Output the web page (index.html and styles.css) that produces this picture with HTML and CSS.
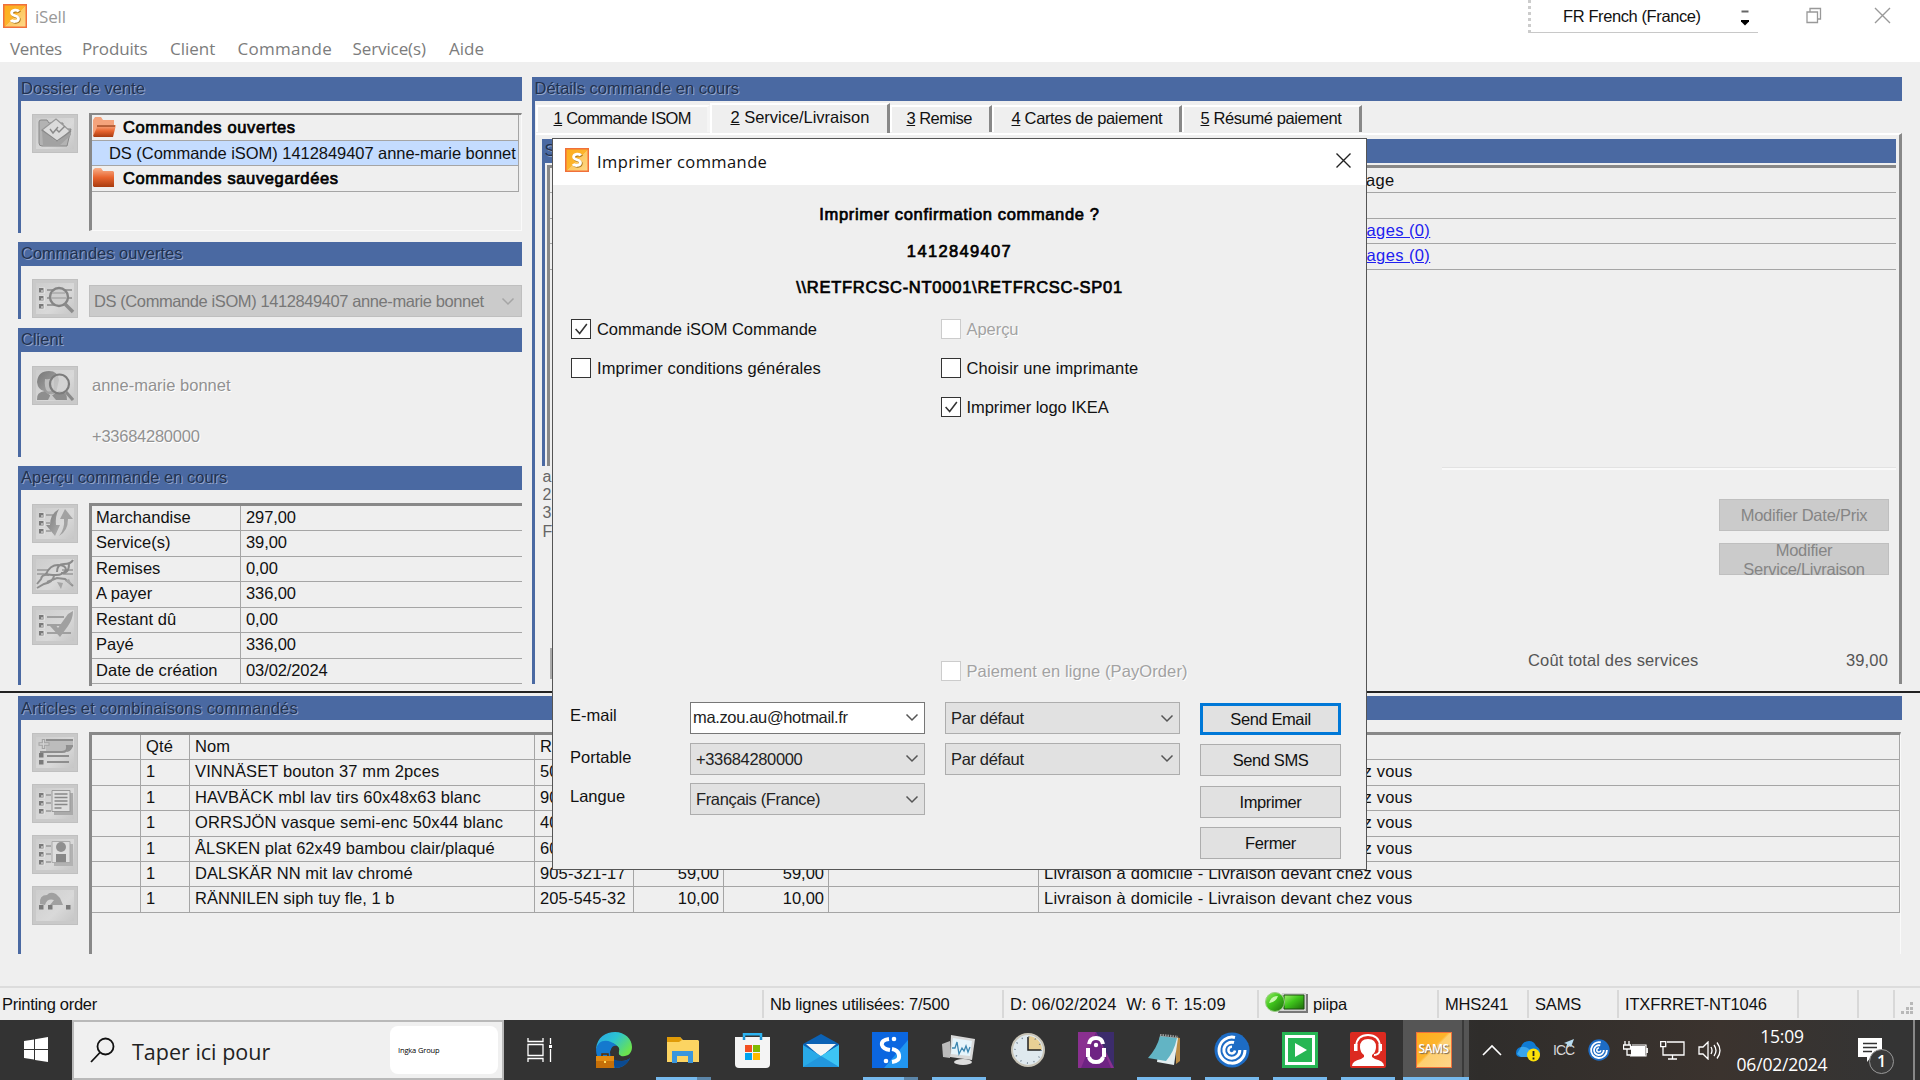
FILE: index.html
```html
<!DOCTYPE html>
<html lang="fr">
<head>
<meta charset="utf-8">
<title>iSell</title>
<link rel="stylesheet" href="styles.css">
</head>
<body>
<svg class="defs" width="0" height="0">
  <defs>
    <linearGradient id="gOrange" x1="0" y1="0" x2="1" y2="1"><stop offset="0" stop-color="#fdae1c"/><stop offset=".5" stop-color="#fdb42c"/><stop offset=".5" stop-color="#fdc860"/><stop offset="1" stop-color="#fed98a"/></linearGradient>
    <linearGradient id="gFolder" x1="0" y1="0" x2="0" y2="1"><stop offset="0" stop-color="#f9b08a"/><stop offset=".5" stop-color="#e8642e"/><stop offset="1" stop-color="#a83c10"/></linearGradient>
    <linearGradient id="gGrey" x1="0" y1="0" x2="1" y2="1"><stop offset="0" stop-color="#777"/><stop offset="1" stop-color="#b0b0b0"/></linearGradient>
    <linearGradient id="gGreen" x1="0" y1="0" x2="1" y2="1"><stop offset="0" stop-color="#9cf06a"/><stop offset=".45" stop-color="#3fc51c"/><stop offset="1" stop-color="#1e6a0c"/></linearGradient>
    <linearGradient id="gEdge" x1="0" y1="0" x2="1" y2=".6"><stop offset="0" stop-color="#2aa5e6"/><stop offset=".5" stop-color="#2bc3d2"/><stop offset="1" stop-color="#6be34f"/></linearGradient>
    <symbol id="app-s" viewBox="0 0 24 24"><rect x=".75" y=".75" width="22.5" height="22.5" fill="url(#gOrange)" stroke="#f0703a" stroke-width="1.5"/><path d="M16 7.5C15 5.8 8.800 5.300 8.600 8.900C8.500 12.400 15.800 11.200 15.500 14.800C15.200 18.300 9.200 18 8 16" fill="none" stroke="#a87820" stroke-width="2.800" transform="translate(.8 .8)"/><path d="M15.800 7.500C14.800 5.600 8.800 5.300 8.600 8.900C8.500 12.400 15.800 11.200 15.500 14.800C15.200 18.300 9.200 18 8 16" fill="none" stroke="#fff" stroke-width="2.800"/></symbol>
    <symbol id="bullets" viewBox="0 0 46 39"><path d="M7 8.500h6v6H7zM7 16.500h6v6H7zM7 24.500h6v6H7z" fill="#e2e2e2"/><path d="M7 9h4.500v4.500H7zM7 17h4.500v4.500H7zM7 25h4.500v4.500H7z" fill="#7a7a7a"/><path d="M9 11h2v2H9zM9 19h2v2H9zM9 27h2v2H9z" fill="#b4b4b4"/></symbol>
    <symbol id="citrix" viewBox="0 0 36 36"><circle cx="18" cy="18" r="17.500" fill="#1d6cc5"/><path d="M21 5.500A13 13 0 1 0 31 18M20 10.500A8 8 0 1 0 25.800 18" fill="none" stroke="#fff" stroke-width="3"/><path d="M18 14.800A3.300 3.300 0 1 0 21 18.500" fill="none" stroke="#fff" stroke-width="2.500"/></symbol>
    <symbol id="chev" viewBox="0 0 14 9"><path d="M1.500 1.500L7 7L12.500 1.500" fill="none" stroke="currentColor" stroke-width="1.500"/></symbol>
  </defs>
</svg>

<header class="top">
  <div class="title-row">
    <svg class="app-icon" width="24" height="24"><use href="#app-s"/></svg>
    <span class="app-name">iSell</span>
    <div class="lang"><span class="lang-text">FR French (France)</span>
      <svg width="8" height="17" viewBox="0 0 8 17"><path d="M.5 1.500h7v2h-7z" fill="#666"/><path d="M0 11h8v1.500L4 16.500L0 12.500z" fill="#000"/></svg></div>
    <svg class="win-max" width="16" height="17" viewBox="0 0 16 17"><path d="M1 5h10.500v10.500H1zM4 5V1.500h10.500V12H11.500" fill="none" stroke="#999" stroke-width="1.300"/></svg>
    <svg class="win-close" width="17" height="17" viewBox="0 0 17 17"><path d="M1 1l15 15M16 1L1 16" stroke="#999" stroke-width="1.400"/></svg>
  </div>
  <nav class="menu"><span class="m1">Ventes</span><span class="m2">Produits</span><span class="m3">Client</span><span class="m4">Commande</span><span class="m5">Service(s)</span><span class="m6">Aide</span></nav>
</header>

<main class="upper">
  <div class="left-col">
    <section class="panel p-dossier">
      <h2>Dossier de vente</h2>
      <div class="panel-body">
        <div class="tools"><div class="tool"><svg width="46" height="39" viewBox="0 0 46 39"><path d="M7 8q0-2 2-2h6l2 3h14v6h8l-4 17H10q-3 0-3-3z" fill="#b3b3b3" stroke="#888"/><path d="M10 16L24 5l14 12-11 11H19z" fill="#dcdcdc" stroke="#999" stroke-width="1.300"/><path d="M10 16l15 12L39 17v4L27 32H11z" fill="#a2a2a2"/><path d="M10 16l15 11L39 17M18 15l3 4 5-6M24 15l3 3 6-6" fill="none" stroke="#8a8a8a" stroke-width="1.400"/></svg></div></div>
        <div class="tree">
          <div class="tree-row bold"><svg width="25" height="22" viewBox="0 0 25 22"><path d="M1 20V4l2-3h6l2 3h11v5H7z" fill="#f4a37c"/><path d="M1 20L6 9h18l-3 12H2z" fill="url(#gFolder)"/><path d="M5 10h18" stroke="#8c3410" stroke-width="1.200"/></svg><span>Commandes ouvertes</span></div>
          <div class="tree-row sel">DS (Commande iSOM) 1412849407 anne-marie bonnet</div>
          <div class="tree-row bold"><svg width="25" height="22" viewBox="0 0 25 22"><path d="M1 19V3l2-2h6l2 3h10l1 1v15H2z" fill="url(#gFolder)"/></svg><span>Commandes sauvegardées</span></div>
        </div>
      </div>
    </section>
    <section class="panel p-open">
      <h2>Commandes ouvertes</h2>
      <div class="panel-body">
        <div class="tools"><div class="tool"><svg width="46" height="39" viewBox="0 0 46 39"><use href="#bullets"/><path d="M15 11h25M15 19h25M15 26h12" stroke="#8a8a8a" stroke-width="1.600"/><circle cx="27" cy="18" r="9" fill="#cecece" stroke="#858585" stroke-width="2.400"/><path d="M20 14h13M19 19h15" stroke="#aaa" stroke-width="1.500"/><path d="M33 25l8 8" stroke="#8c8c8c" stroke-width="3.500"/></svg></div></div>
        <div class="combo-off"><span>DS (Commande iSOM) 1412849407 anne-marie bonnet</span><svg width="14" height="9"><use href="#chev"/></svg></div>
      </div>
    </section>
    <section class="panel p-client">
      <h2>Client</h2>
      <div class="panel-body">
        <div class="tools"><div class="tool"><svg width="46" height="39" viewBox="0 0 46 39"><path d="M5 34q-1-8 8-9l6 5 8-5q9 1 8 9z" fill="#8e8e8e"/><path d="M19 28l5 6h-8z" fill="#c8c8c8"/><path d="M5 16Q6 5 17 5q9 0 10 9l-3 13q-6 4-12-2-6-1-7-9z" fill="url(#gGrey)"/><path d="M13 13q6 1 9-3v12q-3 5-7 3-3-4-2-12z" fill="#bdbdbd"/><circle cx="27.500" cy="18" r="9.500" fill="#d2d2d2" fill-opacity=".7" stroke="#7c7c7c" stroke-width="2.200"/><path d="M34 26l7 8" stroke="#8a8a8a" stroke-width="3.200"/></svg></div></div>
        <div class="client-info"><p>anne-marie bonnet</p><p>+33684280000</p></div>
      </div>
    </section>
    <section class="panel p-overview">
      <h2>Aperçu commande en cours</h2>
      <div class="panel-body">
        <div class="tools">
          <div class="tool"><svg width="46" height="39" viewBox="0 0 46 39"><use href="#bullets"/><path d="M14 11h8M14 19h4M14 27h5" stroke="#999" stroke-width="1.600"/><path d="M27 5q-9 5-9 16h-4l9 11 5-11h-4q-1-9 3-16z" fill="url(#gGrey)"/><path d="M27 32q9-5 9-17h5L33 5l-5 10h4q1 10-5 17z" fill="#a2a2a2"/></svg></div>
          <div class="tool"><svg width="46" height="39" viewBox="0 0 46 39"><path d="M5 15h12M5 19h10M30 15h11M31 19h10" stroke="#999" stroke-width="1.500"/><path d="M14 19q4-9 12-9t8 5q-3 5-10 5t-10-1zM25 17q0-8 7-8t9-4M29 18q8 1 8-9" fill="none" stroke="#8a8a8a" stroke-width="2"/><path d="M5 33l7-4q9-2 10-8M5 29l4-5q1-5 8-4M15 27l10-4 8 1 8 7" fill="none" stroke="#8f8f8f" stroke-width="2"/><path d="M25 27l4 7 2-6zM33 26l7 4-3-6z" fill="#a6a6a6"/></svg></div>
          <div class="tool"><svg width="46" height="39" viewBox="0 0 46 39"><use href="#bullets"/><path d="M15 11h17M15 19h20M15 27h24" stroke="#8e8e8e" stroke-width="1.600"/><path d="M18 20l5-2 3 4L36 8l5-3q0 8-5 15l-8 11z" fill="#a0a0a0"/></svg></div>
        </div>
        <div class="kv">
          <div>Marchandise</div><div>297,00</div>
          <div>Service(s)</div><div>39,00</div>
          <div>Remises</div><div>0,00</div>
          <div>A payer</div><div>336,00</div>
          <div>Restant dû</div><div>0,00</div>
          <div>Payé</div><div>336,00</div>
          <div>Date de création</div><div>03/02/2024</div>
        </div>
      </div>
    </section>
  </div>

  <section class="panel p-details">
    <h2>Détails commande en cours</h2>
    <div class="tabs">
      <div class="tab t1"><u>1</u> Commande ISOM</div><div class="tab t2 active"><u>2</u> Service/Livraison</div><div class="tab t3"><u>3</u> Remise</div><div class="tab t4"><u>4</u> Cartes de paiement</div><div class="tab t5"><u>5</u> Résumé paiement</div>
    </div>
    <div class="tab-page">
      <div class="panel services">
        <h2>S</h2>
        <div class="msg-grid">
          <div>Message</div><div></div><div class="link">Messages (0)</div><div class="link">Messages (0)</div>
        </div>
      </div>
      <div class="below">
        <div class="address"><p>a</p><p>2</p><p>3</p><p>F</p><div class="edge"></div></div>
        <div class="actions">
          <div class="btn-off">Modifier Date/Prix</div>
          <div class="btn-off two">Modifier<br>Service/Livraison</div>
          <div class="total"><span>Coût total des services</span><span>39,00</span></div>
        </div>
      </div>
    </div>
  </section>
</main>

<section class="lower">
  <div class="panel p-items">
    <h2>Articles et combinaisons commandés</h2>
    <div class="panel-body">
      <div class="tools">
        <div class="tool"><svg width="46" height="39" viewBox="0 0 46 39"><path d="M14 7h27v7l-6 5H14z" fill="#bcbcbc"/><path d="M14 7h27M8 19h22q6 0 5-6h6" fill="none" stroke="#8e8e8e" stroke-width="2"/><path d="M35 19q5-1 6-7h-5z" fill="#909090"/><path d="M11.500 6v10M6.500 11h11" stroke="#a2a2a2" stroke-width="3.500"/><path d="M11.500 7v8M7.500 11h9" stroke="#d2d2d2" stroke-width="1.300"/><path d="M7 20h4.500v4.500H7zM7 27h4.500v4.500H7z" fill="#7a7a7a"/><path d="M15 23h22M15 29h22" stroke="#8e8e8e" stroke-width="1.800"/></svg></div>
        <div class="tool"><svg width="46" height="39" viewBox="0 0 46 39"><use href="#bullets"/><path d="M14 11h5M14 19h5M14 27h5" stroke="#999" stroke-width="1.600"/><path d="M22 9h19v22H22z" fill="#aaa"/><path d="M20 6.500h18v21H20z" fill="#dedede" stroke="#999"/><path d="M22.500 10h13M22.500 13.500h13M22.500 17h13M22.500 20.500h13M22.500 24h7" stroke="#888" stroke-width="1.300"/></svg></div>
        <div class="tool"><svg width="46" height="39" viewBox="0 0 46 39"><use href="#bullets"/><path d="M14 11h5M14 19h5M14 27h5" stroke="#999" stroke-width="1.600"/><path d="M22 9h19v22H22z" fill="#b2b2b2"/><path d="M20 6.500h18v21H20z" fill="#dedede" stroke="#aaa"/><circle cx="29" cy="12" r="5" fill="#909090"/><path d="M24 19h10v8H24z" fill="#888"/></svg></div>
        <div class="tool"><svg width="46" height="39" viewBox="0 0 46 39"><path d="M8 18q-1-9 7-9 3-4 9-1l4 4 3 7-13 0 4-5q-7-2-9 5z" fill="#a0a0a0"/><path d="M7 19h4.500v4.500H7zM16 19h4.500v4.500H16zM34 19h4.500v4.500H34z" fill="#7a7a7a"/></svg></div>
      </div>
      <div class="items">
        <div class="r"><i></i><i>Qté</i><i>Nom</i><i>Réf.</i><i></i><i></i><i></i><i></i></div>
        <div class="r"><i></i><i>1</i><i>VINNÄSET bouton 37 mm 2pces</i><i>50</i><i></i><i></i><i></i><i class="liv">Livraison à domicile - Livraison devant chez vous</i></div>
        <div class="r"><i></i><i>1</i><i>HAVBÄCK mbl lav tirs 60x48x63 blanc</i><i>90</i><i></i><i></i><i></i><i class="liv">Livraison à domicile - Livraison devant chez vous</i></div>
        <div class="r"><i></i><i>1</i><i>ORRSJÖN vasque semi-enc 50x44 blanc</i><i>40</i><i></i><i></i><i></i><i class="liv">Livraison à domicile - Livraison devant chez vous</i></div>
        <div class="r"><i></i><i>1</i><i class="tight">ÅLSKEN plat 62x49 bambou clair/plaqué</i><i>60</i><i></i><i></i><i></i><i class="liv">Livraison à domicile - Livraison devant chez vous</i></div>
        <div class="r"><i></i><i>1</i><i class="tight">DALSKÄR NN mit lav chromé</i><i>905-321-17</i><i class="num">59,00</i><i class="num">59,00</i><i></i><i class="liv">Livraison à domicile - Livraison devant chez vous</i></div>
        <div class="r"><i></i><i>1</i><i class="tight">RÄNNILEN siph tuy fle, 1 b</i><i>205-545-32</i><i class="num">10,00</i><i class="num">10,00</i><i></i><i class="liv">Livraison à domicile - Livraison devant chez vous</i></div>
      </div>
    </div>
  </div>
</section>

<footer class="status">
  <span>Printing order</span><span>Nb lignes utilisées: 7/500</span><span class="date">D: 06/02/2024&nbsp; W: 6 T: 15:09</span>
  <span class="led"><svg width="46" height="24" viewBox="0 0 46 24"><path d="M20 3h24v19H14z" fill="#777"/><path d="M18 2h24v18H14z" fill="#d0d0d0"/><path d="M20 4h20v14H20z" fill="url(#gGreen)" stroke="#1c4c10"/><circle cx="11" cy="11" r="9.500" fill="url(#gGreen)" stroke="#9acb85"/><path d="M5 12q2-7 9-7-2 6-9 7z" fill="#c7f7ad"/></svg>piipa</span>
  <span>MHS241</span><span>SAMS</span><span>ITXFRRET-NT1046</span><span></span><span></span>
  <span class="grip"><svg width="14" height="13" viewBox="0 0 14 13"><path d="M9 0h3v3H9zM5 5h3v3H5zM9 5h3v3H9zM0 9h3v3H0zM5 9h3v3H5zM9 9h3v3H9z" fill="#b8b8b8"/></svg></span>
</footer>

<div class="taskbar">
  <div class="start"><svg width="24" height="25" viewBox="0 0 24 25"><path d="M0 4l10-1.500V12H0zM11 2.300L24 0v12H11zM0 13h10v9.500L0 21zM11 13h13v12l-13-2z" fill="#fff"/></svg></div>
  <div class="search">
    <svg width="25" height="26" viewBox="0 0 25 26"><circle cx="15.500" cy="9.500" r="8" fill="none" stroke="#111" stroke-width="1.800"/><path d="M10 15.500L1 25" stroke="#111" stroke-width="1.800"/></svg>
    <span>Taper ici pour</span><div class="pill">Ingka Group</div>
  </div>
  <div class="apps">
    <div class="app view"><svg width="26" height="24" viewBox="0 0 26 24"><path d="M1 0v3.500h15V0M1 24v-3.500h15V24M1 6.500h15v11H1zM23.500 0v6M23.500 11v13" fill="none" stroke="#fff" stroke-width="1.300"/><path d="M22 7h3v3h-3z" fill="#fff"/></svg></div>
    <div class="app wide"><svg width="36" height="36" viewBox="0 0 36 36"><path d="M0 17C1 5 10 0 19 0c10 0 17 7 17 15 0 7-5 10-11 9-3-1-3-3-2-5 1-7-11-11-17-7z" fill="url(#gEdge)"/><path d="M0 18C1 10 8 7 15 10q7 3 7 7-6-4-8 3-1 10 12 9 5 0 8-3c-3 7-9 10-15 10C7 36 0 27 0 18z" fill="#1479ce"/><path d="M14 20q0 9 12 9 5 0 8-3c-3 7-9 10-15 10z" fill="#0b4a91"/><path d="M15 18q1-5 6-4 3 2 2 5-1 4 2 5-3 2-6 1-5-2-4-7z" fill="#333"/><path d="M0 24h18v12H0z" fill="#c56f08"/><path d="M0 24h18v5H0z" fill="#e28b12"/><path d="M6 24v-2h6v2" fill="none" stroke="#5a2c00" stroke-width="1.500"/><path d="M8 29h2v2H8z" fill="#ffe060"/></svg></div>
    <div class="app wide run multi"><svg width="32" height="26" viewBox="0 0 32 26"><path d="M0 1q0-1 1-1h12l3 3h15l1 1v21H0z" fill="#fcd462"/><path d="M0 0h13l2 3-3 2H0z" fill="#e09b08"/><path d="M5 26V14h21v12h-5v-7H10v7z" fill="#3a96dd"/></svg></div>
    <div class="app wide"><svg width="35" height="36" viewBox="0 0 35 36"><path d="M9 8V2.300h17V8" fill="none" stroke="#2cb3f0" stroke-width="2.500"/><path d="M0 5h35v27q0 4-4 4H4q-4 0-4-4z" fill="#f4f4f4"/><path d="M9 5v3M26 5v3" stroke="#1a8fd0" stroke-width="2.500"/><path d="M10 13h7v7h-7z" fill="#f25022"/><path d="M18 13h7v7h-7z" fill="#7fba00"/><path d="M10 21h7v7h-7z" fill="#00a4ef"/><path d="M18 21h7v7h-7z" fill="#ffb900"/></svg></div>
    <div class="app wide"><svg width="36" height="33" viewBox="0 0 36 33"><path d="M0 10L18 0l18 10v10H0z" fill="#0b62b5"/><path d="M3 10h30L18 23z" fill="#f5f5f5"/><path d="M0 11l18 11 18-11v22H0z" fill="#29aae8"/><path d="M18 22l18-11v22z" fill="#3dc5f4"/><path d="M0 33l18-11 18 11z" fill="#2297dd"/></svg></div>
    <div class="app wide run multi"><svg width="36" height="36" viewBox="0 0 36 36"><path d="M0 0h36v36H0z" fill="#0b66e0"/><path d="M36 8v28H12z" fill="#2196f0"/><path d="M17 7q-8 1-7 6 1 4 8 5M20 30q8-1 7-7-1-5-7-6" fill="none" stroke="#fff" stroke-width="4"/><circle cx="22" cy="7" r="2.300" fill="#fff"/><circle cx="14" cy="29" r="2.300" fill="#fff"/></svg></div>
    <div class="app wide run"><svg width="34" height="32" viewBox="0 0 34 32"><path d="M0 10l8-3v17l-7-1z" fill="#bbb"/><path d="M9 1l24 4-3 21-22-3z" fill="#d8d8d8"/><path d="M11 4l19 3-2 15-19-2z" fill="#e6f4fb"/><path d="M10 14h3l2-6 2 12 3-6 2 3 2-5 2 6 2-5" fill="none" stroke="#3d86b0" stroke-width="1.300"/><ellipse cx="21" cy="28" rx="9" ry="3" fill="#ddd"/></svg></div>
    <div class="app"><svg width="34" height="34" viewBox="0 0 34 34"><circle cx="17" cy="17" r="16" fill="#dfe9ef" stroke="#c9c5b8" stroke-width="2"/><path d="M17 17V3a14 14 0 0 1 14 14z" fill="#e8cf95"/><path d="M17 4v13h13" fill="none" stroke="#222" stroke-width="1.500"/><circle cx="17" cy="17" r="13" fill="none" stroke="#678" stroke-width="1.500" stroke-dasharray="1 5.800"/></svg></div>
    <div class="app"><svg width="36" height="36" viewBox="0 0 36 36"><path d="M0 0h36v36H0z" fill="#8a3090"/><path d="M18 0h18v36z" fill="#3c2c6c"/><path d="M18 0l15 36H3z" fill="#6e2383"/><path d="M11 12q1-6 7-6t7 6M11 25q1 5 7 5t7-5" fill="none" stroke="#fff" stroke-width="4"/><path d="M10 16v9M26 16v9" stroke="#fff" stroke-width="4"/><circle cx="18" cy="13" r="2.200" fill="#fff"/></svg></div>
    <div class="app run"><svg width="32" height="32" viewBox="0 0 32 32"><path d="M28 3l4 1v23l-4 3z" fill="#b98b45"/><path d="M12 2l18 2-4 27-17-3z" fill="#e4eef0"/><path d="M12 2l17 2q-3 14-11 23L0 24Q9 14 12 2z" fill="#62b4c4"/><path d="M12 1l18 2" stroke="#999" stroke-width="2.500" stroke-dasharray="1.500 1"/></svg></div>
    <div class="app run"><svg width="36" height="36"><use href="#citrix"/></svg></div>
    <div class="app run"><svg width="36" height="36" viewBox="0 0 36 36"><path d="M0 0h36v36H0z" fill="#26b653"/><path d="M4.500 4.500h27v27h-27z" fill="none" stroke="#fff" stroke-width="3"/><path d="M13 11l12 7-12 7z" fill="#fff"/></svg></div>
    <div class="app run"><svg width="36" height="36" viewBox="0 0 36 36"><rect width="36" height="36" rx="2" fill="#dc2a20"/><path d="M2 34q0-5 9-7l3-2v-2q-4-3-4-8 0-8 8-8t8 8q0 5-4 8v2l3 2q9 2 9 7z" fill="#fff"/><path d="M6 14Q7 3 18 3t12 11v4q-1 5-6 5" fill="none" stroke="#fff" stroke-width="1.800"/><path d="M4 12h3.500v7H4zM28.500 12H32v7h-3.500z" fill="#fff"/></svg></div>
    <div class="app run cur"><div class="sams">SAMS</div></div>
  </div>
  <div class="tray">
    <svg width="20" height="12" viewBox="0 0 20 12"><path d="M1 11L10 2l9 9" fill="none" stroke="#fff" stroke-width="1.600"/></svg>
    <svg class="cloud" width="24" height="22" viewBox="0 0 24 22"><path d="M0 13q0-5 5-6 2-6 8-6 5 0 7 5 4 2 4 6-1 5-6 5H5q-5 0-5-4z" fill="#0f7bd4"/><path d="M5 7q5-1 8 2l9 6q-2 3-6 2H5l-4-3z" fill="#39a5ec"/><circle cx="17.500" cy="15" r="6.500" fill="#fce00a"/><path d="M17.500 11v5M17.500 17.500v2" stroke="#222" stroke-width="1.800"/></svg>
    <span class="icc">ICC<svg width="10" height="10" viewBox="0 0 10 10"><path d="M10 0L7 8 5 6 2 9l1-4-3-1z" fill="#b8dcf0"/></svg></span>
    <svg width="22" height="22"><use href="#citrix"/></svg>
    <svg width="25" height="18" viewBox="0 0 25 18"><path d="M2 0v4M6 0v4M.500 4h7v4H.500zM4 8v6h5" fill="none" stroke="#fff" stroke-width="1.300"/><path d="M8 5h14v10H8z" fill="#fff"/><path d="M7 15h16V4H9M24.300 7v5" fill="none" stroke="#fff" stroke-width="1.200"/></svg>
    <svg width="25" height="19" viewBox="0 0 25 19"><path d="M7 1h17v13H3V8M12.500 14v4M8 18h9M.700.700h5v5h-5zM3 6v4" fill="none" stroke="#fff" stroke-width="1.300"/></svg>
    <svg width="23" height="19" viewBox="0 0 23 19"><path d="M1 6h4l5-5v17l-5-5H1zM13 6q2 3.500 0 7M16 4q4 5.500 0 11M19 1.500q6 8 0 16" fill="none" stroke="#fff" stroke-width="1.300"/></svg>
    <div class="clock"><div>15:09</div><div>06/02/2024</div></div>
    <div class="notif"><svg width="24" height="25" viewBox="0 0 24 25"><path d="M0 0h24v19H13l-4 5v-5H0z" fill="#fff"/><path d="M5 5.500h14M5 9.500h14M5 13.500h9" stroke="#333" stroke-width="1.300"/></svg><b>1</b></div>
  </div>
</div>

<div class="dialog">
  <div class="dlg-title"><svg width="24" height="24"><use href="#app-s"/></svg><span>Imprimer commande</span><svg class="x" width="15" height="15" viewBox="0 0 15 15"><path d="M.500.500l14 14M14.500.500l-14 14" stroke="#222" stroke-width="1.400"/></svg></div>
  <div class="dlg-head"><p class="h-a">Imprimer confirmation commande ?</p><p class="h-b">1412849407</p><p class="h-c">\\RETFRCSC-NT0001\RETFRCSC-SP01</p></div>
  <div class="checks">
    <div class="check"><svg class="box" width="20" height="20" viewBox="0 0 20 20"><path d="M4 10l4.500 5L16.500 4.500" fill="none" stroke="#333" stroke-width="1.700"/></svg><span>Commande iSOM Commande</span></div>
    <div class="check off"><div class="box"></div><span>Aperçu</span></div>
    <div class="check"><div class="box"></div><span class="spread">Imprimer conditions générales</span></div>
    <div class="check"><div class="box"></div><span class="spread">Choisir une imprimante</span></div>
    <div></div>
    <div class="check"><svg class="box" width="20" height="20" viewBox="0 0 20 20"><path d="M4 10l4.500 5L16.500 4.500" fill="none" stroke="#333" stroke-width="1.700"/></svg><span>Imprimer logo IKEA</span></div>
  </div>
  <div class="check off pay"><div class="box"></div><span class="spread">Paiement en ligne (PayOrder)</span></div>
  <div class="form">
    <div class="labels"><span class="l1">E-mail</span><span class="l2">Portable</span><span class="l3">Langue</span></div>
    <div class="combos">
      <div class="combo edit"><span>ma.zou.au@hotmail.fr</span><svg width="14" height="9"><use href="#chev"/></svg></div>
      <div class="combo"><span>+33684280000</span><svg width="14" height="9"><use href="#chev"/></svg></div>
      <div class="combo"><span>Français (France)</span><svg width="14" height="9"><use href="#chev"/></svg></div>
    </div>
    <div class="combos c2">
      <div class="combo"><span>Par défaut</span><svg width="14" height="9"><use href="#chev"/></svg></div>
      <div class="combo"><span>Par défaut</span><svg width="14" height="9"><use href="#chev"/></svg></div>
    </div>
    <div class="buttons"><div class="btn primary">Send Email</div><div class="btn">Send SMS</div><div class="btn b3">Imprimer</div><div class="btn">Fermer</div></div>
  </div>
</div>
</body>
</html>
```
FILE: styles.css
```css
* { box-sizing: border-box; margin: 0; padding: 0; }
body { width: 1920px; height: 1080px; overflow: hidden; position: relative; display: flex; flex-direction: column; background: #efefef; color: #111; font: 16.5px/20px "Liberation Sans", Arial, sans-serif; white-space: nowrap; }
.defs { position: absolute; }
svg { display: block; flex: none; }

/* title and menu */
.top { height: 62px; background: #fff; color: #7c7c7c; font-family: "Open Sans", "Noto Sans", sans-serif; flex: none; }
.title-row { height: 36px; display: flex; align-items: flex-start; padding-left: 3px; }
.app-icon { margin-top: 4px; }
.app-name { margin: 7px 0 0 8px; font-size: 17px; letter-spacing: -.2px; color: #999; }
.lang { margin-left: auto; width: 230px; height: 33px; border-left: 3px dotted #ccc; border-bottom: 1.500px solid #c8c8c8; display: flex; padding: 6px 0 0 32px; color: #111; font-family: "Liberation Sans", Arial, sans-serif; letter-spacing: -.4px; }
.lang-text { width: 178px; }
.lang svg { margin-top: 3px; }
.win-max { margin: 7px 0 0 48px; }
.win-close { margin: 7px 29px 0 52px; }
.menu { display: flex; padding-left: 10px; font-size: 17px; line-height: 26px; letter-spacing: -.35px; }
.m1 { width: 72px; } .m2 { width: 88px; letter-spacing: -.15px; } .m3 { width: 67.500px; letter-spacing: 0; } .m4 { width: 115px; letter-spacing: .3px; } .m5 { width: 96.500px; letter-spacing: -.1px; } .m6 { letter-spacing: 0; }

/* panels */
.panel { border-left: 3px solid #4a69a2; }
.panel > h2 { height: 24px; margin-left: -3px; padding-left: 3px; background: #4a69a2; font-size: 16.5px; line-height: 23px; font-weight: 400; color: #22314f; text-shadow: 1px 1px 0 #93a5ca; }
.p-items > h2 { letter-spacing: .13px; line-height: 24px; }
.panel-body { display: flex; }
.upper { height: 629px; padding: 15px 18px 0; display: flex; gap: 9.500px; flex: none; }
.left-col { width: 504px; display: flex; flex-direction: column; gap: 9px; flex: none; }
.tools { width: 68px; padding: 14px 0 0 10.500px; display: flex; flex-direction: column; gap: 12px; flex: none; }
.tool { width: 46px; height: 39px; border: 4px solid #c9c9c9; background: linear-gradient(135deg, #cdcdcd, #d9d9d9 60%, #c6c6c6); outline: 1px solid #c0c0c0; outline-offset: -1px; }
.tool svg { margin: -4px; }
.p-dossier { height: 156px; }
.p-dossier .tools, .p-open .tools, .p-items .tools { padding-top: 13px; }
.p-open { height: 77px; }
.p-client { height: 129px; }
.p-overview { height: 219px; }

.tree { margin-top: 12px; width: 433px; height: 118px; border: 1px solid #fafafa; border-left: 3px solid #888; border-top: 2px solid #888; }
.tree-row { width: 427px; height: 25.5px; border-bottom: 1.500px solid #a5a5a5; border-right: 1.500px solid #a5a5a5; line-height: 24px; display: flex; }
.tree-row.bold { -webkit-text-stroke: .7px #000; color: #000; gap: 6px; letter-spacing: .63px; }
.tree-row.bold svg { margin-top: 1px; }
.tree-row.sel { background: #c4dcff; padding-left: 17px; letter-spacing: -.05px; }
.combo-off { margin-top: 19px; width: 434px; height: 32px; background: #cbcbcb; border: 1px solid #bfbfbf; color: #777; display: flex; align-items: center; justify-content: space-between; padding: 0 6px 0 4px; letter-spacing: -.41px; }
.combo-off svg { color: #a5a5a5; }
.client-info { padding: 23px 0 0 3px; color: #919191; text-shadow: 1px 1px 0 #fff; }
.client-info p { height: 51px; line-height: 20px; }
.client-info p + p { letter-spacing: -.25px; }
.kv { margin-top: 13px; width: 433px; height: 183px; display: grid; grid-template-columns: 149px 1fr; grid-auto-rows: 25.430px; border-left: 3px solid #888; border-top: 3px solid #888; line-height: 23px; }
.kv div { border-bottom: 1.500px solid #a5a5a5; padding-left: 4px; letter-spacing: .03px; }
.kv div:nth-child(even) { padding-left: 5px; letter-spacing: -.1px; }
.kv div:nth-child(odd) { border-right: 1.500px solid #a5a5a5; }

/* details */
.p-details { width: 1370.500px; height: 607px; display: flex; flex-direction: column; }
.tabs { height: 32px; padding-left: 1px; display: flex; align-items: flex-end; flex: none; }
.tab { height: 27px; border-top: 2px solid #fff; border-left: 2px solid #fff; border-right: 3px solid #888; line-height: 23px; padding-left: 16px; margin-bottom: 1px; letter-spacing: -.55px; }
.tab.active { height: 30px; margin-bottom: 0; letter-spacing: -.03px; line-height: 25px; }
.t1 { width: 174px; border-right-color: #f5f5f5; } .t2 { width: 180px; padding-left: 19px; } .t3 { width: 102px; padding-left: 15px; } .t4.tab { width: 190px; padding-left: 18px; letter-spacing: -.35px; } .t5.tab { width: 180px; padding-left: 17px; letter-spacing: -.4px; }
.tab-page { flex: 1; border-top: 2px solid #fff; border-right: 3px solid #888; margin-left: 1px; padding: 4px 3px 0 6px; }
.services { height: 327px; }
.msg-grid { margin: 2px 0 0 2px; height: 301px; border-left: 3px solid #888; border-top: 3px solid #888; }
.msg-grid div { height: 25.400px; border-bottom: 1.500px solid #a5a5a5; padding-left: 776px; line-height: 24px; letter-spacing: .3px; }
.msg-grid .link { color: #2020f0; text-decoration: underline; padding-left: 776px; letter-spacing: .4px; line-height: 23px; }
.below { display: flex; justify-content: space-between; height: 217px; }
.address { padding: 2px 0 0 1px; color: #666; font-size: 16px; line-height: 18.200px; }
.edge { width: 2px; height: 31px; margin: 107px 0 0 7px; background: #aaa; }
.actions { width: 454px; height: 217px; margin-top: 1px; border-top: 1px solid #e2e2e2; box-shadow: inset 0 2px 0 #f9f9f9; padding: 31px 7px 0 0; display: flex; flex-direction: column; align-items: flex-end; }
.btn-off { width: 170px; height: 32px; background: #cbcbcb; border: 1px solid #bfbfbf; color: #858585; display: flex; align-items: center; justify-content: center; text-align: center; line-height: 19px; margin-bottom: 12px; letter-spacing: -.25px; }
.btn-off.two { padding-top: 1px; }
.total { width: 361px; margin-top: 63px; display: flex; justify-content: space-between; color: #555; padding-right: 1px; letter-spacing: .15px; }

/* ordered items */
.lower { flex: 1; border-top: 2px solid #222; padding: 3px 18px 0; }
.p-items { height: 258px; }
.p-items .panel-body { height: 234px; }
.items { margin-top: 12px; width: 1812px; border-left: 3px solid #888; border-top: 3px solid #888; border-right: 1px solid #fafafa; line-height: 23px; }
.r { display: grid; grid-template-columns: 49px 49px 345px 99px 90px 105px 210px 861px; height: 25.400px; width: 1808px; }
.r i { font-style: normal; border-right: 1.500px solid #a5a5a5; border-bottom: 1.500px solid #a5a5a5; padding-left: 5px; letter-spacing: .13px; }
.r .tight { letter-spacing: .02px; }
.r .liv { letter-spacing: .2px; }
.r .num { text-align: right; padding-right: 4px; letter-spacing: 0; }

/* status bar */
.status { height: 34px; border-top: 2px solid #dcdcdc; display: grid; grid-template-columns: 760px 240px 255px 180px 90px 90px 180px 60px 36px 29px; flex: none; padding-top: 2px; }
.status span { height: 28px; line-height: 28px; border-right: 2px solid #d8d8d8; padding-left: 7px; letter-spacing: -.15px; }
.status span:first-child { padding-left: 2px; width: 764px; letter-spacing: -.3px; }
.status span:nth-child(n+2) { margin-left: 4px; margin-right: -4px; padding-left: 6px; }
.status .date { letter-spacing: .23px; }
.status span.led { display: flex; gap: 3px; padding-left: 5px; line-height: 29px; }
.status .led svg { margin-top: 1px; }
.status .grip { border: 0; padding: 12px 0 0 9px; }

/* taskbar */
.taskbar { height: 60px; display: flex; background: linear-gradient(90deg, #333 0, #333 1400px, #2f2d2b 1480px, #3b332e 1720px, #343434 1890px); flex: none; }
.start { width: 72px; padding: 17px 0 0 24px; }
.search { width: 432px; border: 2px solid #b9b9b9; background: #f0f0f0; display: flex; align-items: center; padding: 0 4px 0 16px; color: #222; font: 21.500px/30px "Open Sans", "Noto Sans", sans-serif; }
.search span { margin: 3px 0 0 17px; }
.pill { margin-left: auto; width: 108px; height: 48px; border-radius: 8px; background: #fff; font-size: 7.500px; line-height: 48px; padding-left: 8px; letter-spacing: -.15px; color: #000; }
.apps { display: flex; padding-left: 2px; width: 965px; flex: none; }
.app { width: 68.100px; height: 60px; display: flex; align-items: center; justify-content: center; flex: none; }
.view { width: 68px; margin-right: 5.400px; }
.wide { width: 69.100px; }
.run { background: linear-gradient(#76b9ed, #76b9ed) center bottom / 54px 3px no-repeat; }
.multi { background: linear-gradient(90deg, #76b9ed 41px, #5b85a8 41px) center bottom / 55px 3px no-repeat; }
.cur { width: 66px; justify-content: flex-start; padding-left: 13px; background: linear-gradient(#76b9ed, #76b9ed) left bottom / 66px 3px no-repeat, linear-gradient(90deg, #555 59px, #3a3a3a 59px, #3a3a3a 61px, #555 61px); }
.sams { width: 36px; height: 36px; border: 1.500px solid #f0703a; background: linear-gradient(135deg, #fdae1c, #fdb42c 45%, #fdcf70 50%, #fed58a); color: #fff; font: 600 12px/32px "Open Sans", sans-serif; display: flex; justify-content: center; text-shadow: 1px 1px 1px #765; letter-spacing: -.6px; }
.tray { display: flex; align-items: center; flex: 1; padding-left: 13px; color: #fff; }
.tray .cloud { margin: 2px 13px 0 14px; }
.icc { position: relative; width: 22px; font: 14px/20px "Liberation Sans", sans-serif; color: #d8d8d8; letter-spacing: -1px; margin-right: 13px; }
.icc svg { position: absolute; right: 1px; top: -1px; }
.tray > svg:nth-of-type(n+3) { margin-right: 12.500px; }
.clock { width: 94px; margin: -1px 0 0 2px; text-align: center; font: 17.500px/28px "Open Sans", "Noto Sans", sans-serif; letter-spacing: -.2px; }
.notif { position: relative; margin-left: 29px; width: 57px; height: 60px; padding-top: 18px; border-right: 2px solid #888; }
.notif b { position: absolute; left: 11px; top: 29px; width: 25px; height: 25px; border: 1px solid #999; border-radius: 50%; background: #3a3a3a; font: 600 16px/23px "Open Sans", sans-serif; text-align: center; }

/* print window */
.dialog { position: absolute; left: 552px; top: 138px; width: 815px; height: 732px; background: #efefef; border: 1px solid #555; }
.dlg-title { height: 46px; background: #fff; display: flex; padding: 9px 0 0 12px; font: 16.500px/27px "Open Sans", "Noto Sans", sans-serif; }
.dlg-title span { margin-left: 8px; letter-spacing: .4px; }
.dlg-title .x { margin: 5px 15px 0 auto; }
.dlg-head { height: 134px; text-align: center; -webkit-text-stroke: .7px #000; color: #000; padding: 19px 0 0 0; }
.dlg-head p { height: 36.500px; line-height: 20px; }
.h-a { letter-spacing: .65px; }
.h-b { letter-spacing: 1.350px; }
.h-c { letter-spacing: .75px; }
.checks { display: grid; grid-template-columns: 369.500px 1fr; grid-auto-rows: 39px; padding-left: 18px; height: 342px; }
.check { display: flex; gap: 6px; line-height: 20px; }
.check span { letter-spacing: -.05px; }
.check .spread { letter-spacing: .1px; }
.box { width: 20px; height: 20px; border: 1.500px solid #333; background: #fff; }
.off { color: #a2a2a2; text-shadow: 1px 1px 0 #fff; }
.off .box { border-color: #ccc; }
.pay { padding-left: 387.500px; height: 41px; }
.form { display: flex; padding-left: 17px; }
.labels { width: 120px; display: flex; flex-direction: column; }
.l1 { padding-top: 3px; height: 45px; } .l2 { height: 39px; }
.combos { width: 234.500px; display: flex; flex-direction: column; gap: 8.500px; }
.c2 { margin-left: 20.500px; }
.combo { height: 32px; border: 1.500px solid #adadad; background: #e1e1e1; padding: 0 5px; display: flex; align-items: center; justify-content: space-between; letter-spacing: -.35px; color: #222; }
.combo svg { color: #555; }
.combo.edit { background: #fff; border-color: #777; padding-left: 2px; padding-bottom: 2px; }
.buttons { width: 141px; margin: 1px 0 0 20.500px; display: flex; flex-direction: column; gap: 9px; }
.btn { height: 32px; border: 1.500px solid #adadad; background: #e1e1e1; text-align: center; line-height: 30px; letter-spacing: -.4px; }
.primary { border: 3px solid #0078d7; line-height: 27px; }
.b3 { margin-top: 1px; }
```
